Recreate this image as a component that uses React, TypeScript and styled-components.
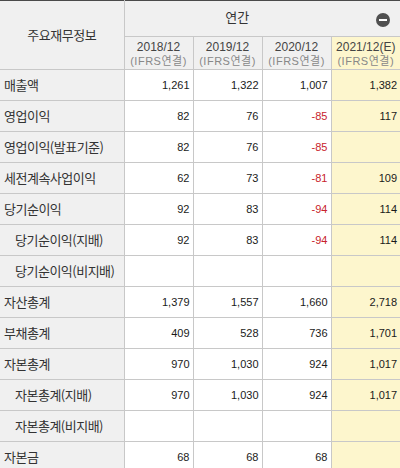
import React from 'react';
import styled, { createGlobalStyle } from 'styled-components';

const GlobalStyle = createGlobalStyle`
  html, body {
    margin: 0;
    padding: 0;
    background: #ffffff;
  }
`;

const Table = styled.table`
  width: 400px;
  border-collapse: collapse;
  table-layout: fixed;
  border-top: 1px solid #4a4a4a;
  font-family: 'Liberation Sans', Arial, sans-serif;
`;

const HeadCell = styled.th`
  background: #f0f0f0;
  border: 1px solid #c8c8c8;
  border-top: none;
  font-weight: normal;
  padding: 0;
  color: #333;
`;

const TitleCell = styled(HeadCell)`
  border-left: none;
  font-family: 'Noto Sans CJK KR', 'Noto Sans', sans-serif;
  font-size: 13px;
  letter-spacing: -0.5px;
  vertical-align: middle;
  padding-bottom: 2px;
`;

const PeriodCell = styled(HeadCell)`
  border-right: none;
  height: 30px;
  position: relative;
  font-family: 'Noto Sans CJK KR', 'Noto Sans', sans-serif;
  font-size: 13px;
  padding-right: 50px;
  padding-bottom: 5px;
`;

const CollapseIcon = styled.span`
  position: absolute;
  right: 10px;
  top: 12px;
  width: 14px;
  height: 14px;
  border-radius: 50%;
  background: #505050;
  display: flex;
  align-items: center;
  justify-content: center;

  &::after {
    content: '';
    width: 8px;
    height: 2px;
    background: #ffffff;
  }
`;

const YearCell = styled(HeadCell)<{ $last?: boolean; $estimate?: boolean }>`
  height: 31px;
  line-height: 14px;
  vertical-align: middle;
  padding-top: 1px;
  background: ${(p) => (p.$estimate ? '#fdf6cd' : '#f0f0f0')};
  ${(p) => (p.$last ? 'border-right: none;' : '')}
`;

const YearText = styled.div`
  color: #444;
  font-size: 12px;
`;

const BasisText = styled.div`
  color: #888;
  font-size: 11px;
  font-family: 'Liberation Sans', 'Noto Sans CJK KR', sans-serif;
  letter-spacing: 0.5px;
`;

const Row = styled.tr`
  height: 31px;
`;

const LabelCell = styled.th<{ $indent?: boolean }>`
  background: #f0f0f0;
  border-bottom: 1px solid #c8c8c8;
  border-right: 1px solid #c8c8c8;
  font-weight: normal;
  text-align: left;
  padding: 0 0 2px ${(p) => (p.$indent ? '15px' : '4px')};
  font-family: 'Noto Sans CJK KR', 'Noto Sans', sans-serif;
  font-size: 13px;
  letter-spacing: -0.5px;
  color: #333;
  white-space: nowrap;
`;

const ValueCell = styled.td<{ $estimate?: boolean; $negative?: boolean; $last?: boolean }>`
  background: ${(p) => (p.$estimate ? '#fdf6cd' : '#ffffff')};
  border-bottom: 1px solid #c8c8c8;
  border-right: ${(p) => (p.$last ? 'none' : '1px solid #c8c8c8')};
  text-align: right;
  padding: 0 3px 0 0;
  font-size: 11px;
  color: ${(p) => (p.$negative ? '#c8232c' : '#1a1a1a')};
`;

const years = [
  { year: '2018/12', estimate: false },
  { year: '2019/12', estimate: false },
  { year: '2020/12', estimate: false },
  { year: '2021/12(E)', estimate: true },
];

const rows: { label: string; indent?: boolean; values: string[] }[] = [
  { label: '매출액', values: ['1,261', '1,322', '1,007', '1,382'] },
  { label: '영업이익', values: ['82', '76', '-85', '117'] },
  { label: '영업이익(발표기준)', values: ['82', '76', '-85', ''] },
  { label: '세전계속사업이익', values: ['62', '73', '-81', '109'] },
  { label: '당기순이익', values: ['92', '83', '-94', '114'] },
  { label: '당기순이익(지배)', indent: true, values: ['92', '83', '-94', '114'] },
  { label: '당기순이익(비지배)', indent: true, values: ['', '', '', ''] },
  { label: '자산총계', values: ['1,379', '1,557', '1,660', '2,718'] },
  { label: '부채총계', values: ['409', '528', '736', '1,701'] },
  { label: '자본총계', values: ['970', '1,030', '924', '1,017'] },
  { label: '자본총계(지배)', indent: true, values: ['970', '1,030', '924', '1,017'] },
  { label: '자본총계(비지배)', indent: true, values: ['', '', '', ''] },
  { label: '자본금', values: ['68', '68', '68', ''] },
];

const App: React.FC = () => {
  return (
    <>
      <GlobalStyle />
      <Table>
        <colgroup>
          <col style={{ width: 124 }} />
          <col style={{ width: 69 }} />
          <col style={{ width: 69 }} />
          <col style={{ width: 69 }} />
          <col style={{ width: 69 }} />
        </colgroup>
        <thead>
          <tr>
            <TitleCell rowSpan={2}>주요재무정보</TitleCell>
            <PeriodCell colSpan={4}>
              연간
              <CollapseIcon />
            </PeriodCell>
          </tr>
          <tr>
            {years.map((y, i) => (
              <YearCell key={y.year} $estimate={y.estimate} $last={i === years.length - 1}>
                <YearText>{y.year}</YearText>
                <BasisText>(IFRS연결)</BasisText>
              </YearCell>
            ))}
          </tr>
        </thead>
        <tbody>
          {rows.map((row) => (
            <Row key={row.label}>
              <LabelCell $indent={row.indent}>{row.label}</LabelCell>
              {row.values.map((v, i) => (
                <ValueCell
                  key={i}
                  $estimate={years[i].estimate}
                  $negative={v.startsWith('-')}
                  $last={i === row.values.length - 1}
                >
                  {v}
                </ValueCell>
              ))}
            </Row>
          ))}
        </tbody>
      </Table>
    </>
  );
};

export default App;
